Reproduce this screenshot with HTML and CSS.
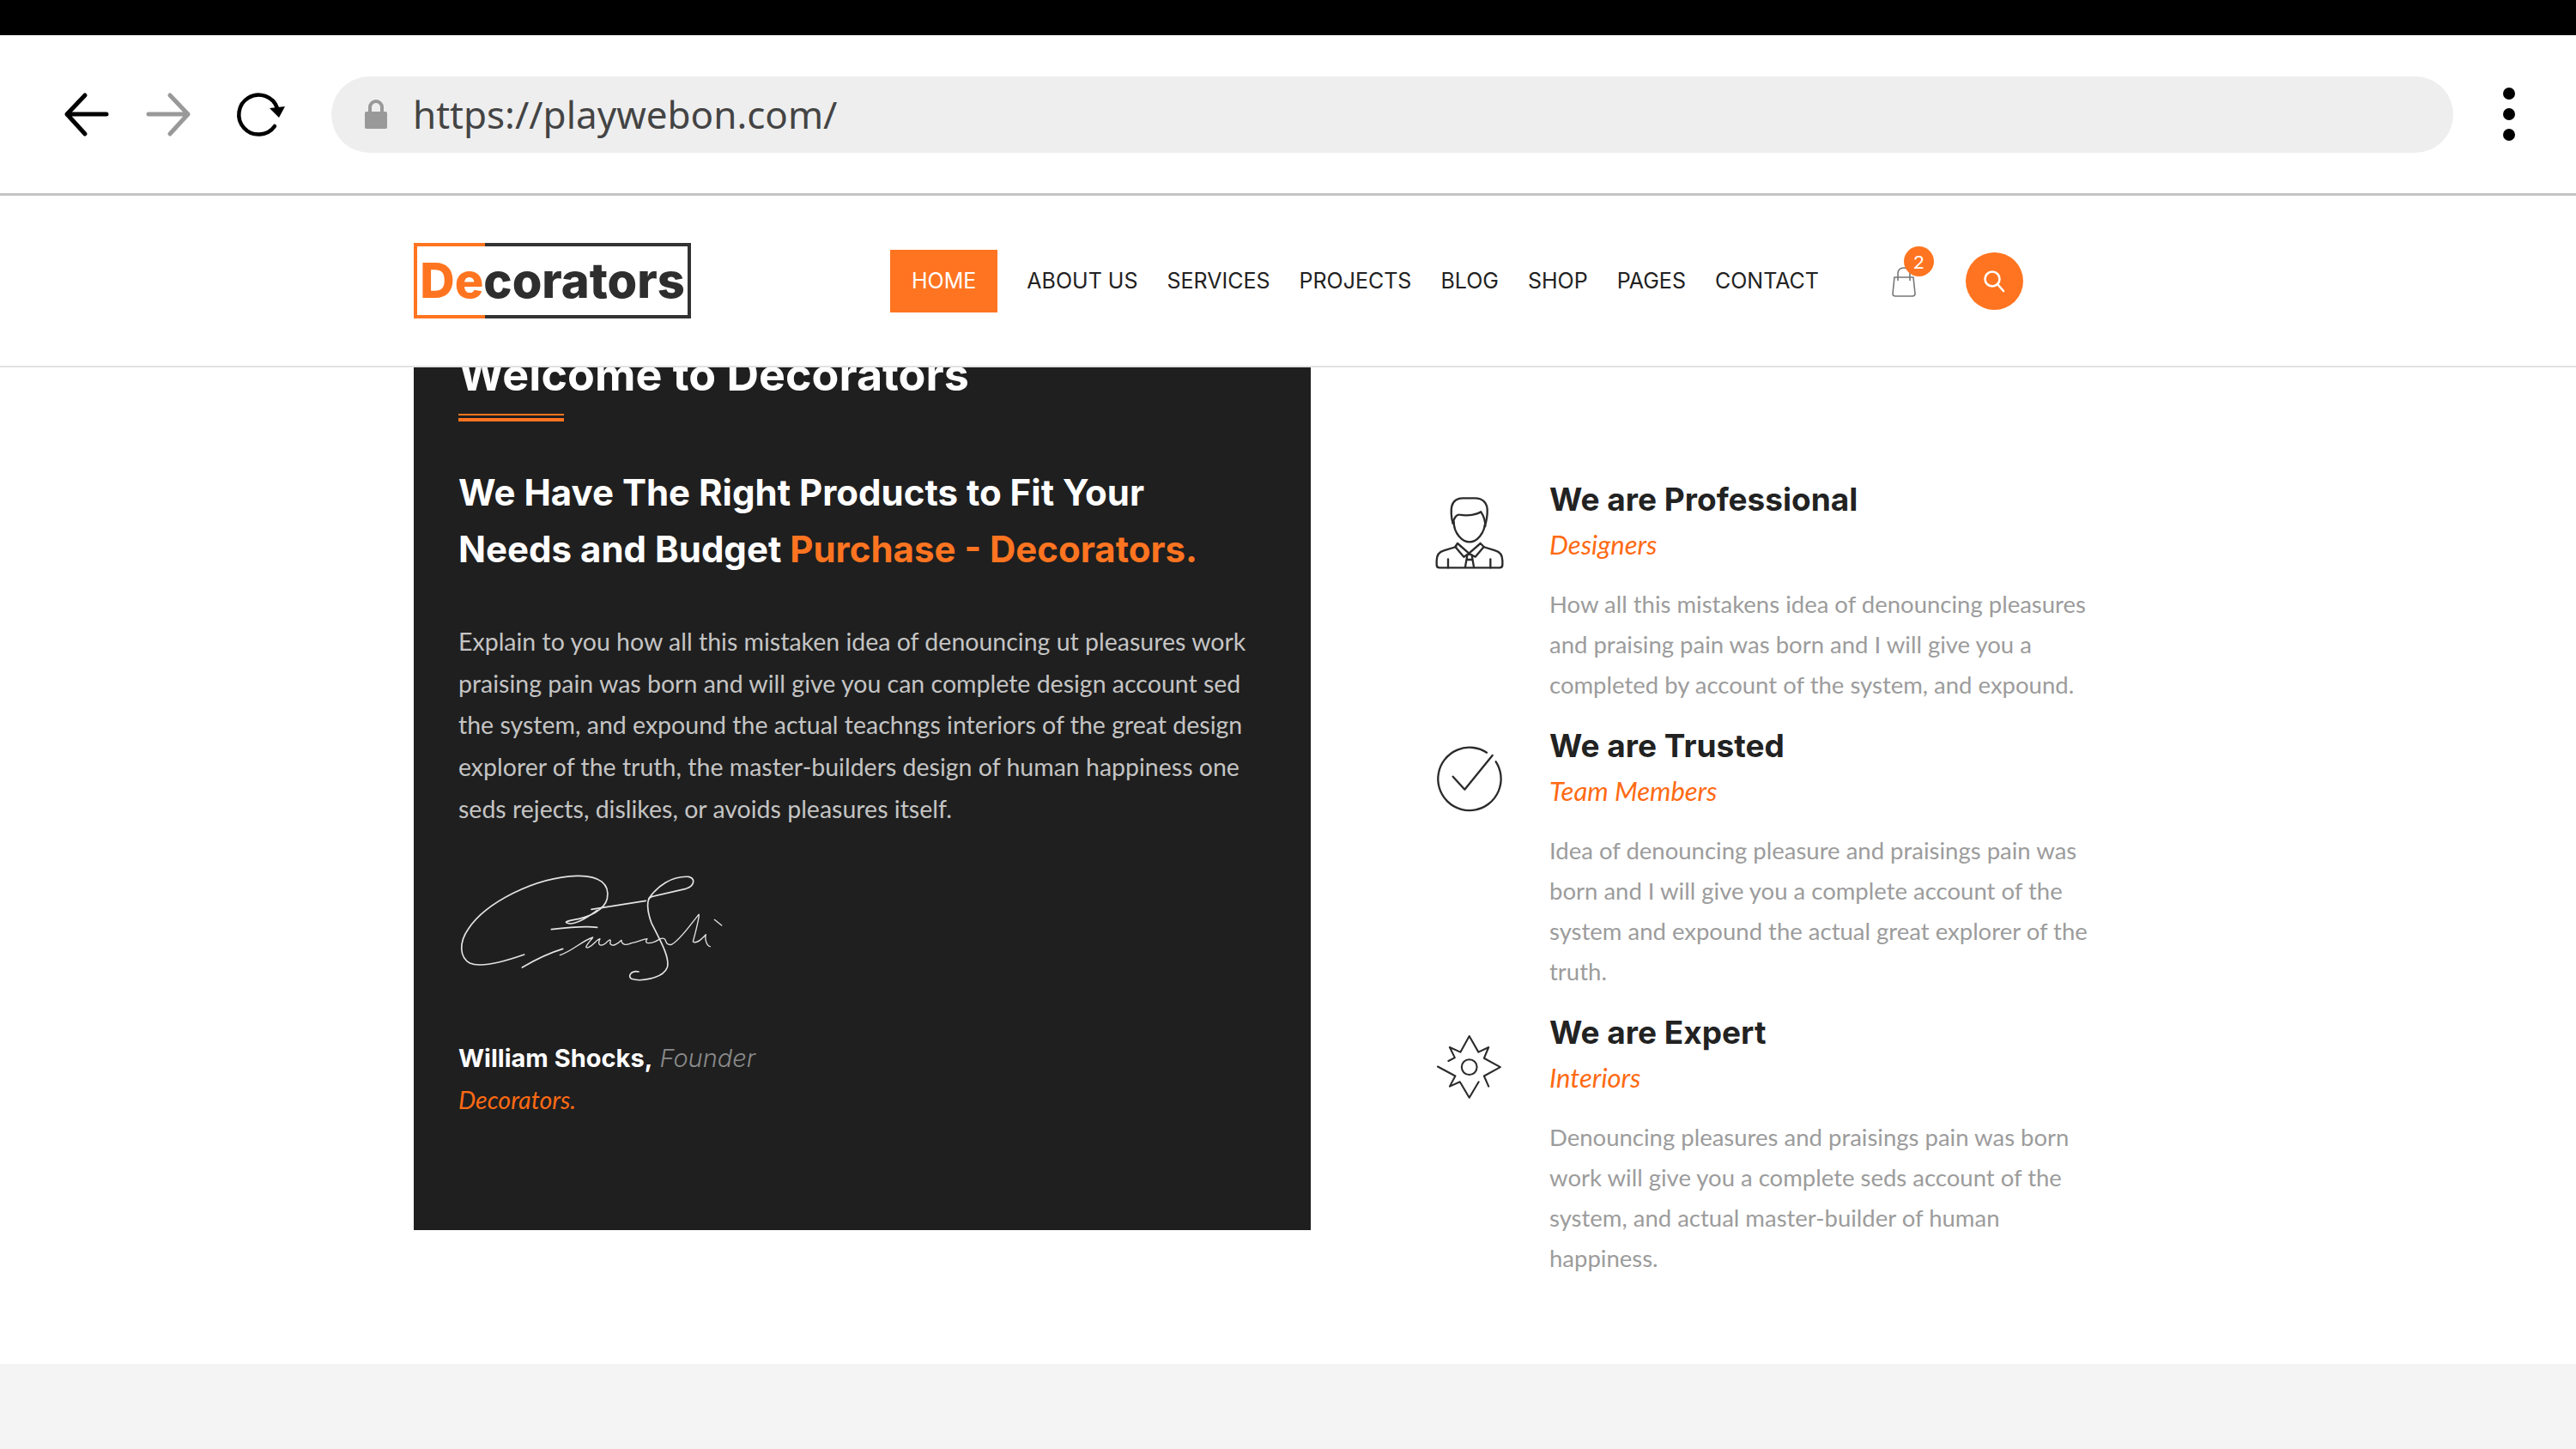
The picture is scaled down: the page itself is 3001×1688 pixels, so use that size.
FILE: index.html
```html
<!DOCTYPE html>
<html lang="en">
<head>
    <meta charset="UTF-8">
    <title>Decorators</title>
    <link rel="stylesheet" href="styles.css">
</head>
<body>
    <div class="status-bar"></div>

    <div class="browser-bar">
        <svg class="browser-icon" width="290" height="80" viewBox="60 95 290 80">
            <path d="M124 135H78M99 113L78 135L99 158" fill="none" stroke="#000" stroke-width="5" stroke-linecap="round" stroke-linejoin="round"/>
            <path d="M173 135H219M198 113L219 135L198 158" fill="none" stroke="#999" stroke-width="5" stroke-linecap="round" stroke-linejoin="round"/>
            <path d="M320 149A23 23 0 1 1 323 128" fill="none" stroke="#000" stroke-width="4.5" stroke-linecap="round"/>
            <path d="M314 128L332 126L325 139Z" fill="#000"/>
        </svg>
        <div class="address">
            <svg class="lock" width="26" height="34" viewBox="0 0 26 34">
                <path d="M6 15V9a7 7 0 0 1 14 0v6" fill="none" stroke="#999" stroke-width="4"/>
                <rect x="0" y="14" width="26" height="20" rx="2" fill="#999"/>
            </svg>
            <span class="url">https://playwebon.com/</span>
        </div>
        <div class="dots"><i></i><i></i><i></i></div>
    </div>

    <header class="site-header">
        <div class="logo"><span class="accent">De</span>corators</div>
        <nav class="nav">
            <a class="active" href="#">HOME</a>
            <a href="#">ABOUT US</a>
            <a href="#">SERVICES</a>
            <a href="#">PROJECTS</a>
            <a href="#">BLOG</a>
            <a href="#">SHOP</a>
            <a href="#">PAGES</a>
            <a href="#">CONTACT</a>
        </nav>
        <div class="cart">
            <svg width="30" height="35" viewBox="0 0 30 35">
                <path d="M4 12H26L28 31Q28 34 25 34H5Q2 34 2 31Z" fill="none" stroke="#777" stroke-width="1.6"/>
                <path d="M8 16V8Q8 1 15 1Q22 1 22 8V16" fill="none" stroke="#777" stroke-width="1.6"/>
            </svg>
            <span class="badge">2</span>
        </div>
        <div class="search-btn">
            <svg width="28" height="28" viewBox="0 0 28 28">
                <circle cx="12" cy="12" r="8.5" fill="none" stroke="#fff" stroke-width="2.6"/>
                <path d="M18 18L25 26" stroke="#fff" stroke-width="2.6" stroke-linecap="round"/>
            </svg>
        </div>
    </header>

    <main class="about">
        <section class="panel">
            <h2 class="panel-title">Welcome to Decorators</h2>
            <div class="rule"></div>
            <h3 class="panel-lead">We Have The Right Products to Fit Your Needs and Budget <span class="accent">Purchase - Decorators.</span></h3>
            <p class="panel-text">Explain to you how all this mistaken idea of denouncing ut pleasures work praising pain was born and will give you can complete design account sed the system, and expound the actual teachngs interiors of the great design explorer of the truth, the master-builders design of human happiness one seds rejects, dislikes, or avoids pleasures itself.</p>
            <svg class="signature" width="310" height="128" viewBox="155 95 930 384" fill="none" stroke="#e4e4e4" stroke-width="5" stroke-linecap="round" stroke-linejoin="round">
                <path d="M385 380C300 410 230 425 195 410C160 390 155 340 190 290C250 200 420 110 570 105C650 103 685 135 675 185C665 225 610 250 560 258C525 265 525 268 545 272C565 272 600 255 640 225"/>
                <path d="M620 222L810 192"/>
                <path d="M820 185C850 140 900 105 960 108C985 115 980 140 950 150L830 178C810 185 815 230 830 270C860 330 895 390 885 425C870 465 790 475 760 465C745 455 760 435 785 440"/>
                <path d="M378 425C420 400 470 375 520 360M480 292C540 285 600 280 640 285"/>
                <path stroke-width="4" d="M510 382C550 370 590 330 625 320C610 340 590 360 610 355C630 345 640 325 650 325C640 345 650 355 670 340C685 325 690 325 685 340C690 355 710 345 725 330C725 345 740 350 760 340C790 335 800 325 815 325C800 345 830 345 860 325C890 315 870 350 900 345C930 330 970 270 995 240C1000 235 985 300 975 335C990 345 1010 320 1020 310C1015 330 1025 350 1035 352M1050 258L1075 278"/>
            </svg>
            <p class="founder"><b>William Shocks,</b> <em>Founder</em></p>
            <p class="company">Decorators.</p>
        </section>

        <section class="features">
            <article class="feature">
                <svg class="feature-icon" width="80" height="85" viewBox="110 85 240 255" fill="none" stroke="#2b2b2b" stroke-width="7" stroke-linecap="round" stroke-linejoin="round">
                    <path d="M172 180C165 160 165 130 168 120C172 100 190 92 205 92H250C275 92 290 108 292 130C293 150 290 170 283 190"/>
                    <path d="M172 180C175 160 185 148 195 150C225 155 255 150 270 140C280 155 285 170 285 190"/>
                    <path d="M175 175C175 215 205 245 230 245C255 245 283 215 285 175"/>
                    <path d="M188 250L180 262L210 297L228 285L250 297L280 262L268 250M188 250L228 285L268 250"/>
                    <path d="M222 292L215 332M238 292L245 332M220 307H240"/>
                    <path d="M183 262L140 275C122 280 115 295 115 310V325C115 332 120 335 125 335H335C340 335 345 332 345 325V310C345 295 338 280 320 275L278 262"/>
                    <path d="M155 305V335M303 305V335"/>
                </svg>
                <div class="feature-body">
                    <h4>We are Professional</h4>
                    <h5>Designers</h5>
                    <p>How all this mistakens idea of denouncing pleasures and praising pain was born and I will give you a completed by account of the system, and expound.</p>
                </div>
            </article>
            <article class="feature">
                <svg class="feature-icon" width="80" height="85" viewBox="110 68 240 255" fill="none" stroke="#2b2b2b" stroke-width="7" stroke-linecap="round" stroke-linejoin="round">
                    <path d="M290 103A110 110 0 1 0 322 135"/>
                    <path d="M172 187L213 232L310 113"/>
                </svg>
                <div class="feature-body">
                    <h4>We are Trusted</h4>
                    <h5>Team Members</h5>
                    <p>Idea of denouncing pleasure and praisings pain was born and I will give you a complete account of the system and expound the actual great explorer of the truth.</p>
                </div>
            </article>
            <article class="feature">
                <svg class="feature-icon" width="90" height="90" viewBox="95 1000 270 270" fill="none" stroke="#2b2b2b" stroke-width="7" stroke-linecap="round" stroke-linejoin="round">
                    <path d="M147 1108L172 1095L152 1054L194 1073L229 1010L265 1073L305 1054L287 1097L351 1132L287 1167L305 1208M266 1190L229 1252L192 1190L152 1208L174 1167L105 1130"/>
                    <circle cx="229" cy="1132" r="30"/>
                </svg>
                <div class="feature-body">
                    <h4>We are Expert</h4>
                    <h5>Interiors</h5>
                    <p>Denouncing pleasures and praisings pain was born work will give you a complete seds account of the system, and actual master-builder of human happiness.</p>
                </div>
            </article>
        </section>
    </main>

    <footer class="footer"></footer>
</body>
</html>
```

FILE: styles.css
```css
* {
    box-sizing: border-box;
}

body {
    margin: 0;
    height: 1688px;
    overflow: hidden;
    background: #fff;
    font-family: "Lato", sans-serif;
    display: flex;
    flex-direction: column;
}

.accent {
    color: #ff7420;
}

.status-bar {
    height: 41px;
    background: #000;
}

/* browser chrome */
.browser-bar {
    height: 187px;
    display: flex;
    align-items: center;
    padding: 0 71px 0 60px;
    border-bottom: 3px solid #c4c4c4;
}

.browser-icon {
    flex: none;
}

.address {
    flex: 1;
    height: 89px;
    margin-left: 36px;
    margin-right: 58px;
    background: #eeeeee;
    border-radius: 45px;
    display: flex;
    align-items: center;
    padding-left: 39px;
}

.lock {
    flex: none;
}

.url {
    margin-left: 30px;
    font-family: "Noto Sans", sans-serif;
    font-size: 44px;
    color: #444;
}

.dots {
    display: flex;
    flex-direction: column;
    gap: 10px;
}

.dots i {
    display: block;
    width: 14px;
    height: 14px;
    border-radius: 50%;
    background: #000;
}

/* site header */
.site-header {
    height: 200px;
    display: flex;
    align-items: center;
    padding-left: 482px;
    border-bottom: 2px solid #e2e2e2;
    flex: none;
    background: #fff;
}

.logo {
    width: 323px;
    height: 88px;
    border: 4px solid;
    border-image: linear-gradient(to right, #ff7420 82px, #333 82px) 1;
    display: flex;
    align-items: center;
    justify-content: center;
    font-family: "Inter", sans-serif;
    font-weight: 800;
    font-size: 56px;
    color: #2e2e2e;
}

.nav {
    display: flex;
    align-items: center;
    margin-left: 232px;
    gap: 34px;
}

.nav a {
    font-family: "Inter", sans-serif;
    font-size: 25px;
    color: #222;
    text-decoration: none;
}

.nav a.active {
    background: #ff7420;
    color: #fff;
    padding: 0 25px;
    height: 73px;
    line-height: 73px;
}

.cart {
    position: relative;
    margin-left: 84px;
    width: 30px;
    height: 35px;
    margin-top: 2px;
}

.badge {
    position: absolute;
    left: 15px;
    top: -24px;
    width: 35px;
    height: 35px;
    border-radius: 50%;
    background: #ff7420;
    color: #fff;
    font-size: 22px;
    text-align: center;
    line-height: 35px;
}

.search-btn {
    width: 67px;
    height: 67px;
    margin-left: 57px;
    border-radius: 50%;
    background: #ff7420;
    display: flex;
    align-items: center;
    justify-content: center;
}

/* main content */
.about {
    flex: 1;
    display: flex;
    align-items: flex-start;
    padding-left: 482px;
}

.panel {
    width: 1045px;
    height: 1005px;
    background: #1f1f1f;
    padding: 0 52px;
    overflow: hidden;
}

.panel-title {
    margin: -22px 0 0;
    font-family: "Inter", sans-serif;
    font-weight: 700;
    font-size: 52px;
    line-height: 62px;
    color: #fff;
}

.rule {
    width: 123px;
    height: 9px;
    margin-top: 14px;
    border-top: 2px solid #ff7420;
    border-bottom: 4px solid #ff7420;
}

.panel-lead {
    margin: 50px 0 0;
    font-family: "Inter", sans-serif;
    font-weight: 700;
    font-size: 42px;
    line-height: 66px;
    color: #fff;
}

.panel-text {
    margin: 50px 0 0;
    font-size: 28.5px;
    line-height: 48.7px;
    color: #c4c4c4;
}

.signature {
    display: block;
    margin-top: 50px;
}

.founder {
    margin: 64px 0 0;
    font-family: "Inter", sans-serif;
    font-size: 29px;
    line-height: 48px;
    color: #fff;
}

.founder em {
    font-weight: 300;
    color: #8a8a8a;
}

.company {
    margin: 0;
    font-style: italic;
    font-size: 28.5px;
    line-height: 48px;
    color: #ff6a13;
}

.features {
    width: 780px;
    margin-left: 145px;
    padding-top: 130px;
    display: flex;
    flex-direction: column;
    gap: 24px;
}

.feature {
    display: flex;
}

.feature-icon {
    flex: none;
    margin-top: 20px;
    width: 80px;
    margin-right: 53px;
}

.feature-body h4 {
    margin: 0;
    font-family: "Inter", sans-serif;
    font-weight: 700;
    font-size: 37px;
    line-height: 48px;
    color: #222;
}

.feature-body h5 {
    margin: 4px 0 0;
    font-weight: 400;
    font-style: italic;
    font-size: 31px;
    line-height: 48px;
    color: #ff6a13;
}

.feature-body p {
    margin: 22px 0 0;
    font-size: 27.5px;
    line-height: 47px;
    color: #9c9c9c;
}

.footer {
    height: 99px;
    background: #f4f4f4;
    flex: none;
}
```
